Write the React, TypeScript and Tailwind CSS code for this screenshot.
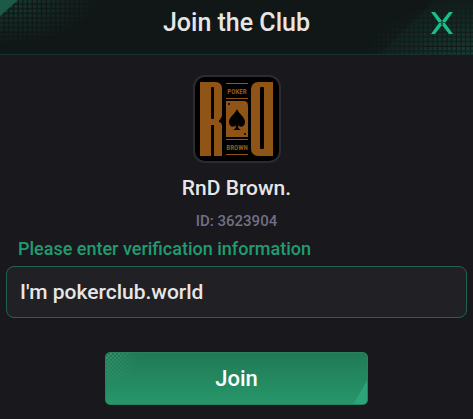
function CloseIcon() {
  return (
    <svg viewBox="0 0 22 22" className="size-[22px]" aria-hidden="true">
      <path d="M0 0h4l7 9 7-9h4l-8 11 8 11h-4l-7-9-7 9H0l8-11z" fill="#18bf86" />
      <path d="M10 9h2v4h-2zM8 10h6v1H8z" fill="#0f5b44" />
    </svg>
  );
}

function ClubLogo() {
  return (
    <svg viewBox="2 2 84 84" className="size-full" role="img" aria-label="RnD Poker Brown">
      <g fill="#8f5416">
        <rect x="7" y="7" width="12" height="74" />
        <rect x="12" y="7" width="17" height="39" rx="6" />
        <rect x="12" y="47" width="17" height="34" rx="4" />
        <rect x="14" y="40" width="12" height="12" />
        <rect x="22" y="74" width="7" height="7" />
        <rect x="58" y="7" width="19" height="74" rx="7" />
        <rect x="69" y="7" width="11" height="74" />
        <rect x="33" y="8" width="22" height="1" />
        <rect x="33" y="23" width="22" height="1" />
        <path d="M33 26h18q4 0 4 5v31H33z" />
        <rect x="33" y="64" width="22" height="1" />
        <rect x="33" y="79" width="22" height="1" />
      </g>
      <g fill="#000">
        <rect x="18" y="12" width="3" height="32" rx="1" />
        <rect x="18" y="50" width="3" height="32" />
        <rect x="67" y="12" width="4" height="62" rx="1" />
        <path d="M44 34c-2 5-8 8-8 13 0 5 5 6 7 3 0 3-1 4-3 5h8c-2-1-3-2-3-5 2 3 7 2 7-3 0-5-6-8-8-13z" />
        <circle cx="36" cy="29" r="1" />
        <circle cx="52" cy="59" r="1" />
      </g>
      <g
        fill="#8f5416"
        textAnchor="middle"
        className="font-['Roboto_Condensed','Roboto',sans-serif] text-[7px] font-bold"
      >
        <text x="44" y="19">POKER</text>
        <text x="44" y="75">BROWN</text>
      </g>
    </svg>
  );
}

function HeaderPattern() {
  return (
    <svg className="absolute inset-0 size-full" aria-hidden="true">
      <defs>
        <pattern id="dots" width="4.7" height="4.7" patternUnits="userSpaceOnUse">
          <rect width="3.4" height="3.4" fill="#1c5a49" />
        </pattern>
        <radialGradient id="fadeLeft" cx="0" cy="0" r="1">
          <stop offset="0" stopColor="#fff" stopOpacity="0.6" />
          <stop offset="1" stopColor="#fff" stopOpacity="0" />
        </radialGradient>
        <radialGradient id="fadeRight" cx="1" cy="1" r="1">
          <stop offset="0" stopColor="#fff" stopOpacity="0.55" />
          <stop offset="1" stopColor="#fff" stopOpacity="0" />
        </radialGradient>
        <mask id="maskLeft">
          <rect width="100" height="46" fill="url(#fadeLeft)" />
        </mask>
        <mask id="maskRight">
          <rect width="110" height="54" fill="url(#fadeRight)" />
        </mask>
      </defs>
      <rect width="100" height="46" fill="url(#dots)" mask="url(#maskLeft)" />
      <path d="M0 0h18L0 16z" fill="#1c5a47" />
      <svg x="100%" overflow="visible">
        <g transform="translate(-110 0)">
          <path d="M17 54 71 0h39v54z" fill="#1c5a49" opacity="0.1" />
          <rect width="110" height="54" fill="url(#dots)" mask="url(#maskRight)" />
        </g>
      </svg>
    </svg>
  );
}

function ButtonPattern() {
  return (
    <svg className="absolute inset-0 size-full" aria-hidden="true">
      <defs>
        <pattern id="checks" width="4" height="4" patternUnits="userSpaceOnUse">
          <path d="M0 0h2v2H0zM2 2h2v2H2z" fill="#48a780" />
        </pattern>
        <radialGradient id="fadeChecks" cx="0" cy="0" r="1">
          <stop offset="0" stopColor="#fff" stopOpacity="0.55" />
          <stop offset="1" stopColor="#fff" stopOpacity="0" />
        </radialGradient>
        <mask id="maskChecks">
          <rect width="34" height="34" fill="url(#fadeChecks)" />
        </mask>
      </defs>
      <rect width="34" height="34" fill="url(#checks)" mask="url(#maskChecks)" />
      <svg x="100%" overflow="visible">
        <path d="M-15 53 0 27v26z" fill="#2da37b" />
      </svg>
    </svg>
  );
}

export default function App() {
  return (
    <div className="min-h-screen bg-[#19181d] font-['Roboto',sans-serif] font-medium text-[#e6e6e6]">
      <header className="relative flex h-[55px] items-start justify-center border-b border-[#16302d] bg-[#111717] pt-2">
        <HeaderPattern />
        <h1 className="relative text-[25px] leading-[30px]">Join the Club</h1>
        <button type="button" aria-label="Close" className="absolute top-3 right-5">
          <CloseIcon />
        </button>
      </header>

      <main className="flex flex-col items-center px-1.5 pt-5">
        <div className="size-[88px] overflow-hidden rounded-xl border-2 border-[#2b2b32] bg-black">
          <ClubLogo />
        </div>
        <h2 className="mt-3 text-[21px] leading-[26px]">RnD Brown.</h2>
        <p className="mt-2 text-[15px] leading-6 text-[#727085]">ID: 3623904</p>

        <form className="mt-1 flex w-full flex-col items-center" onSubmit={(e) => e.preventDefault()}>
          <label htmlFor="verification" className="self-start pl-3 text-lg leading-6 text-[#219c70]">
            Please enter verification information
          </label>
          <input
            id="verification"
            type="text"
            defaultValue="I'm pokerclub.world"
            className="mt-[5px] h-[52px] w-full rounded-lg border border-[#216351] bg-[#212025] px-[13px] text-[21px] outline-none"
          />
          <button
            type="submit"
            className="relative mt-[34px] h-[53px] w-4/7 overflow-hidden rounded-[5px] border border-[#268260] bg-linear-to-b from-[#207a55] to-[#27966a] text-[22px] text-white"
          >
            <ButtonPattern />
            <span className="relative">Join</span>
          </button>
        </form>
      </main>
    </div>
  );
}
